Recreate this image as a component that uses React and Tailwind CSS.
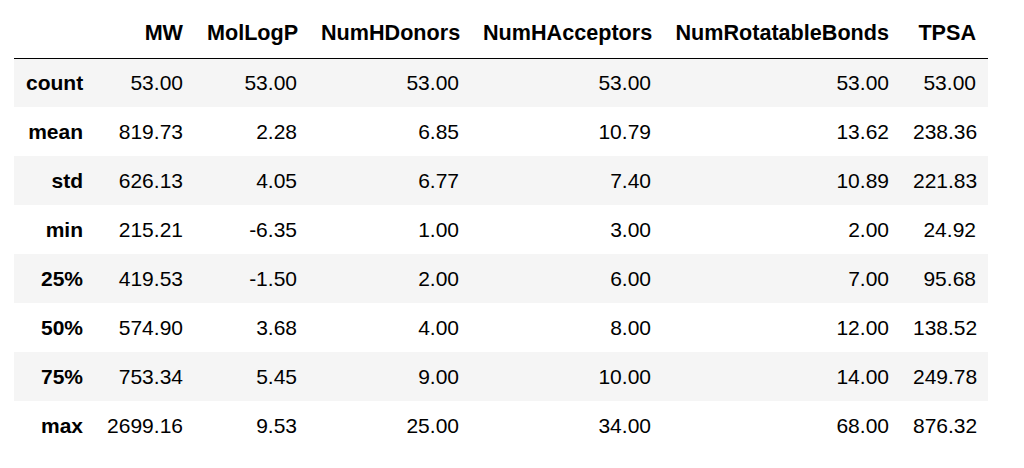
import React from "react";

const columns = [
    { name: "MW", width: "w-[100px]" },
    { name: "MolLogP", width: "w-[114px]" },
    { name: "NumHDonors", width: "w-[162px]" },
    { name: "NumHAcceptors", width: "w-[192px]" },
    { name: "NumRotatableBonds", width: "w-[238px]" },
    { name: "TPSA", width: "w-[87px]" },
];

const rows = [
    ["count", "53.00", "53.00", "53.00", "53.00", "53.00", "53.00"],
    ["mean", "819.73", "2.28", "6.85", "10.79", "13.62", "238.36"],
    ["std", "626.13", "4.05", "6.77", "7.40", "10.89", "221.83"],
    ["min", "215.21", "-6.35", "1.00", "3.00", "2.00", "24.92"],
    ["25%", "419.53", "-1.50", "2.00", "6.00", "7.00", "95.68"],
    ["50%", "574.90", "3.68", "4.00", "8.00", "12.00", "138.52"],
    ["75%", "753.34", "5.45", "9.00", "10.00", "14.00", "249.78"],
    ["max", "2699.16", "9.53", "25.00", "34.00", "68.00", "876.32"],
];

export default function App() {
    return (
        <div
            className="w-[1024px] h-[468px] bg-white text-black pl-[14px] pt-[9px]"
            style={{ fontFamily: '"Liberation Sans", Arial, sans-serif' }}
        >
            <table className="w-[974px] border-collapse table-fixed text-[21px] leading-none">
                <thead>
                    <tr className="h-[49px] border-b border-black">
                        <th className="w-[81px] px-3"></th>
                        {columns.map((c) => (
                            <th
                                key={c.name}
                                className={`${c.width} px-3 text-right font-bold align-middle text-[21.6px]`}
                            >
                                {c.name}
                            </th>
                        ))}
                    </tr>
                </thead>
                <tbody>
                    {rows.map((r, i) => (
                        <tr
                            key={r[0]}
                            className={`h-[49px] ${
                                i % 2 === 0 ? "bg-[#f5f5f5]" : "bg-white"
                            }`}
                        >
                            <th className="px-3 text-right font-bold align-middle">
                                {r[0]}
                            </th>
                            {r.slice(1).map((v, j) => (
                                <td
                                    key={j}
                                    className="px-3 text-right align-middle"
                                >
                                    {v}
                                </td>
                            ))}
                        </tr>
                    ))}
                </tbody>
            </table>
        </div>
    );
}
